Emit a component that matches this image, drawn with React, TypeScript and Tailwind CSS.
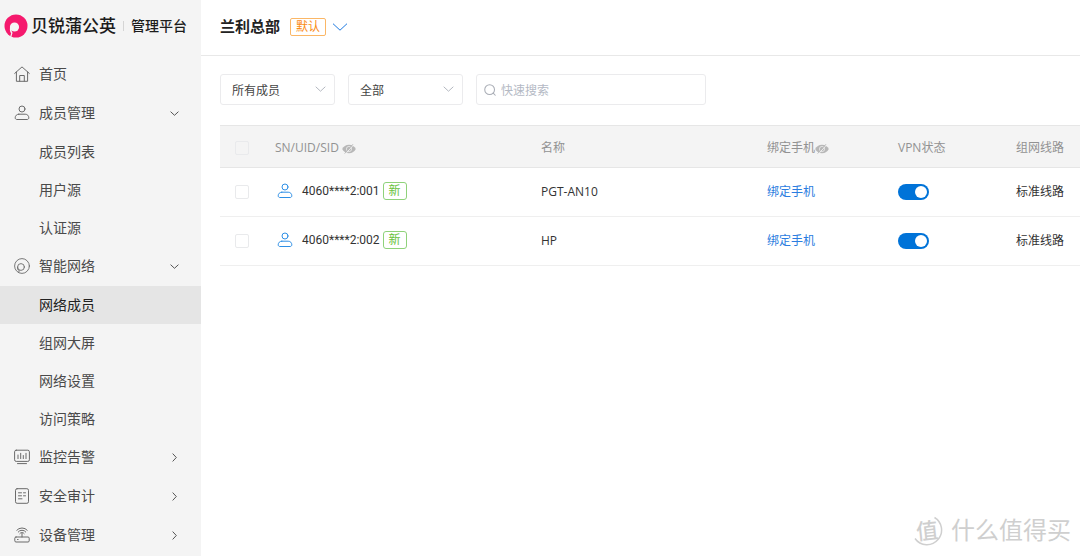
import { useState } from 'react';
import type { ReactNode } from 'react';
import clsx from 'clsx';

interface MenuGroup {
  label: string;
  icon: ReactNode;
  open?: boolean;
  children?: string[];
}

interface Member {
  sn: string;
  name: string;
  line: string;
}

const members: Member[] = [
  { sn: '4060****2:001', name: 'PGT-AN10', line: '标准线路' },
  { sn: '4060****2:002', name: 'HP', line: '标准线路' },
];

function Icon({ children, className = 'size-4' }: { children: ReactNode; className?: string }) {
  return (
    <svg
      viewBox="0 0 16 16"
      fill="none"
      stroke="currentColor"
      strokeLinecap="round"
      strokeLinejoin="round"
      className={clsx('shrink-0', className)}
      aria-hidden="true"
    >
      {children}
    </svg>
  );
}

function UserShape() {
  return (
    <>
      <circle cx="8" cy="4" r="3" />
      <path d="M4.8 9.2h6.4c2.2 0 3.6 1.6 3.6 3.6 0 1-.7 1.7-1.7 1.7H2.9c-1 0-1.7-.7-1.7-1.7 0-2 1.4-3.6 3.6-3.6z" />
    </>
  );
}

function Chevron({ className }: { className?: string }) {
  return (
    <svg viewBox="0 0 16 8" fill="none" stroke="currentColor" className={className} aria-hidden="true">
      <path d="M1 .7l7 6.5 7-6.5" vectorEffect="non-scaling-stroke" />
    </svg>
  );
}

function HiddenEye() {
  return (
    <svg viewBox="0 0 14 10" className="mt-[2px] h-[10px] w-[14px] shrink-0" aria-hidden="true">
      <path d="M7 .8C3.8.8 1.4 2.6.2 5 1.4 7.4 3.8 9.2 7 9.2s5.6-1.8 6.8-4.2C12.6 2.6 10.2.8 7 .8z" fill="#b8b8b8" />
      <circle cx="7" cy="5" r="2.6" fill="none" stroke="#f4f4f4" strokeWidth=".7" />
      <path d="M3.6 9.8L11.8.6" stroke="#f4f4f4" strokeWidth=".9" />
      <path d="M2.6 9.6L11 .2" stroke="#b8b8b8" strokeWidth=".9" />
    </svg>
  );
}

const menu: MenuGroup[] = [
  {
    label: '首页',
    icon: (
      <Icon>
        <path d="M.7 7.4L8 .9l7.3 6.5M2.4 6v9.3h11.2V6M5.7 15.2V9.5h4.6v5.7" />
      </Icon>
    ),
  },
  {
    label: '成员管理',
    icon: (
      <Icon>
        <UserShape />
      </Icon>
    ),
    open: true,
    children: ['成员列表', '用户源', '认证源'],
  },
  {
    label: '智能网络',
    icon: (
      <Icon>
        <circle cx="8" cy="8" r="7.4" strokeWidth=".9" />
        <circle cx="7" cy="9" r="3.4" strokeWidth=".9" />
        <path d="M3.6 9c-.4 2 .2 3 1.6 3.4L4.8 14.4" strokeWidth=".9" />
      </Icon>
    ),
    open: true,
    children: ['网络成员', '组网大屏', '网络设置', '访问策略'],
  },
  {
    label: '监控告警',
    icon: (
      <Icon>
        <rect x=".6" y="1.2" width="14.8" height="11.2" rx="1.6" />
        <path d="M4 6v3.6M6.7 4.3v5.3M9.3 6.5v3.1M12 4.3v5.3M3.5 14.6h9" />
      </Icon>
    ),
    open: false,
    children: [],
  },
  {
    label: '安全审计',
    icon: (
      <Icon>
        <rect x="1.5" y=".7" width="13" height="14.6" rx="1.6" />
        <path d="M4.5 4.8h3M9.5 4.8h2M4.5 7.8h3M9.5 7.8h2M4.5 10.8h3.5" />
      </Icon>
    ),
    open: false,
    children: [],
  },
  {
    label: '设备管理',
    icon: (
      <Icon>
        <rect x=".8" y="10" width="14.4" height="5" rx="1.2" />
        <path d="M3.5 12.5h.6M8 10V6.5M5.8 6.6a2.6 2.6 0 0 1 4.4 0M4.2 5a4.700 4.700 0 0 1 7.600 0M2.800 3.200a6.900 6.900 0 0 1 10.400 0" />
      </Icon>
    ),
    open: false,
    children: [],
  },
];

function Logo() {
  return (
    <div className="flex h-14 items-center pb-1 pl-1 whitespace-nowrap text-[#1c1c1c]">
      <svg viewBox="0 0 24 24" className="size-6 shrink-0" aria-hidden="true">
        <circle cx="12" cy="12" r="11.5" fill="#f5196d" />
        <circle cx="10.5" cy="13" r="4.6" fill="#f4f4f4" />
        <path d="M6.6 13.500C6.200 16 6.600 17.800 7.900 19L6.600 23.200" fill="none" stroke="#f4f4f4" strokeWidth="1.200" />
      </svg>
      <span className="ml-[3px] text-[17px] font-medium">贝锐蒲公英</span>
      <span className="mx-[7px] h-[10px] w-px bg-[#d5d5d5]" />
      <span className="text-sm font-medium">管理平台</span>
    </div>
  );
}

function Sidebar() {
  const [active, setActive] = useState('网络成员');
  const [groups, setGroups] = useState(menu);

  const toggle = (label: string) =>
    setGroups(groups.map((g) => (g.label === label ? { ...g, open: !g.open } : g)));

  return (
    <aside className="w-[201px] shrink-0 bg-[#f4f4f4]">
      <Logo />
      <nav className="flex flex-col gap-px text-sm text-[#4a4a4a]">
        {groups.map((group) => (
          <div key={group.label}>
            <button
              type="button"
              onClick={() => toggle(group.label)}
              className="flex h-[38px] w-full items-center pr-[22px] pb-[2px] pl-[14px] text-left"
            >
              <span className="text-[#6b6b6b]">{group.icon}</span>
              <span className="ml-[9px] flex-1">{group.label}</span>
              {group.children && (
                <Chevron className={clsx('h-[5px] w-[9px] stroke-[#555]', !group.open && '-rotate-90')} />
              )}
            </button>
            {group.open &&
              group.children?.map((item) => (
                <a
                  key={item}
                  href="#"
                  onClick={() => setActive(item)}
                  className={clsx(
                    'flex h-[38px] items-center pb-px pl-[39px]',
                    item === active && 'bg-[#e5e5e5] text-[#222]'
                  )}
                >
                  {item}
                </a>
              ))}
          </div>
        ))}
      </nav>
    </aside>
  );
}

function Select({ label, options }: { label: string; options: string[] }) {
  return (
    <div className="relative w-[115px]">
      <select
        aria-label={label}
        className="h-[31px] w-full appearance-none rounded-[3px] border border-[#ebebed] bg-white pt-[2px] pl-[11px] text-xs text-[#444] outline-none"
      >
        {options.map((option) => (
          <option key={option}>{option}</option>
        ))}
      </select>
      <Chevron className="pointer-events-none absolute top-[12px] right-[9px] h-[6px] w-[11px] text-[#b4b8c0]" />
    </div>
  );
}

function CheckBox({ label }: { label: string }) {
  return (
    <input
      type="checkbox"
      aria-label={label}
      className="block size-[14px] appearance-none rounded-[2px] border border-[#e9eaec] checked:border-[#0073d8] checked:bg-[#0073d8]"
    />
  );
}

function Switch({ label }: { label: string }) {
  return (
    <input
      type="checkbox"
      role="switch"
      aria-label={label}
      defaultChecked
      className="flex h-4 w-[31px] appearance-none items-center rounded-full bg-[#c5c9d0] px-[2px] before:size-3 before:rounded-full before:bg-white checked:justify-end checked:bg-[#0073d8]"
    />
  );
}

function MemberTable() {
  return (
    <table className="mt-5 w-full table-fixed text-left text-xs whitespace-nowrap text-[#333]">
      <colgroup>
        <col className="w-[55px]" />
        <col className="w-[266px]" />
        <col />
        <col className="w-[131px]" />
        <col className="w-[118px]" />
        <col className="w-16" />
      </colgroup>
      <thead>
        <tr className="h-[42px] border-y border-[#e6e6e6] bg-[#f4f4f4] text-[#929292] [&>th]:pt-[2px] [&>th]:font-normal">
          <th className="pl-[15px]">
            <CheckBox label="全选" />
          </th>
          <th>
            <span className="flex items-center gap-[3px]">
              SN/UID/SID
              <HiddenEye />
            </span>
          </th>
          <th>名称</th>
          <th>
            <span className="flex items-center">
              绑定手机
              <HiddenEye />
            </span>
          </th>
          <th>VPN状态</th>
          <th>组网线路</th>
        </tr>
      </thead>
      <tbody>
        {members.map((member) => (
          <tr key={member.sn} className="h-[49px] border-b border-[#efefef]">
            <td className="pl-[15px]">
              <CheckBox label={member.sn} />
            </td>
            <td>
              <span className="flex items-center pb-[2px] pl-[2px]">
                <Icon className="size-4 text-[#2e8fe6]">
                  <UserShape />
                </Icon>
                <span className="mr-[3px] ml-[9px] font-[Roboto]">{member.sn}</span>
                <span className="flex h-[18px] items-center rounded-[3px] border border-[#8fd27a] px-[5px] text-[#67c23a]">
                  新
                </span>
              </span>
            </td>
            <td>{member.name}</td>
            <td>
              <a href="#" className="text-[#2b7de0]">
                绑定手机
              </a>
            </td>
            <td>
              <Switch label={`${member.name} VPN状态`} />
            </td>
            <td>{member.line}</td>
          </tr>
        ))}
      </tbody>
    </table>
  );
}

function Watermark() {
  return (
    <div className="pointer-events-none absolute right-[9px] bottom-[10px] flex items-center gap-2 text-[#cfcfcf]">
      <span className="relative flex size-8 items-center justify-center">
        <svg viewBox="0 0 32 32" fill="none" className="absolute inset-0" aria-hidden="true">
          <path d="M23.5 3.5A14.5 14.5 0 0 1 27 25.5 14.5 14.5 0 0 1 4 24.5" stroke="#cfcfcf" strokeWidth="1.5" />
        </svg>
        <span className="-rotate-6 text-[22px] leading-8 font-medium">值</span>
      </span>
      <span className="text-2xl leading-8">什么值得买</span>
    </div>
  );
}

export default function App() {
  return (
    <div className="relative flex min-h-screen overflow-hidden bg-white font-['Open_Sans','Noto_Sans_CJK_SC',sans-serif]">
      <Sidebar />
      <main className="min-w-0 flex-1">
        <header className="flex h-14 items-center border-b border-[#e8e8e8] pb-[2px] pl-[19px]">
          <h1 className="text-[15px] font-bold text-[#222]">兰利总部</h1>
          <span className="ml-[10px] flex h-[18px] items-center rounded-[2px] border border-[#fbb766] px-[5px] text-xs text-[#fa8c16]">
            默认
          </span>
          <button type="button" aria-label="切换网络" className="ml-[6px] text-[#1f7ae0]">
            <Chevron className="h-[8px] w-[16px]" />
          </button>
        </header>

        <div className="pt-[18px] pl-[19px]">
          <div className="flex gap-[13px]">
            <Select label="成员类型" options={['所有成员']} />
            <Select label="状态" options={['全部']} />
            <label className="flex h-[31px] w-[230px] items-center gap-[5px] rounded-[3px] border border-[#ebebed] px-[7px]">
              <Icon className="size-3 text-[#a9adb5]">
                <circle cx="7.5" cy="7.5" r="6.5" strokeWidth="1.4" />
                <path d="M12.3 12.3l2.7 2.7" strokeWidth="1.4" />
              </Icon>
              <input
                type="text"
                aria-label="快速搜索"
                placeholder="快速搜索"
                className="min-w-0 flex-1 pt-[2px] text-xs outline-none placeholder:text-[#b4b9c4]"
              />
            </label>
          </div>

          <MemberTable />
        </div>
      </main>
      <Watermark />
    </div>
  );
}
